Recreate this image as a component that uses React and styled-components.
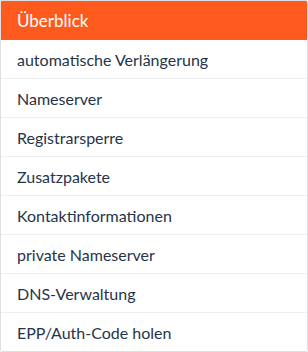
import React from "react";
import styled, { createGlobalStyle } from "styled-components";

const GlobalStyle = createGlobalStyle`
    body {
        margin: 0;
        background: #ffffff;
        font-family: Lato, "Open Sans", sans-serif;
    }
`

const Menu = styled.nav`
    width: 306px;
    border: 1px solid #dcdfe3;
    border-radius: 2px;
    background: #ffffff;
    display: flex;
    flex-direction: column;
    overflow: hidden;
`

const Item = styled.a`
    display: flex;
    align-items: center;
    height: 38px;
    padding: 0 16px;
    font-size: ${props => props.active ? "17px" : "16px"};
    color: ${props => props.active ? "#ffffff" : "#26344a"};
    background: ${props => props.active ? "#ff5a1e" : "#ffffff"};
    border-bottom: 1px solid ${props => props.active ? "#ff5a1e" : "#eceef1"};
    text-decoration: none;
    cursor: pointer;

    &:last-child {
        border-bottom: none;
    }
`

const links = [
    "Überblick",
    "automatische Verlängerung",
    "Nameserver",
    "Registrarsperre",
    "Zusatzpakete",
    "Kontaktinformationen",
    "private Nameserver",
    "DNS-Verwaltung",
    "EPP/Auth-Code holen",
]

export default function App() {
    return (
        <>
            <GlobalStyle />
            <Menu>
                {links.map((label, i) => (
                    <Item key={label} active={i === 0}>{label}</Item>
                ))}
            </Menu>
        </>
    )
}
